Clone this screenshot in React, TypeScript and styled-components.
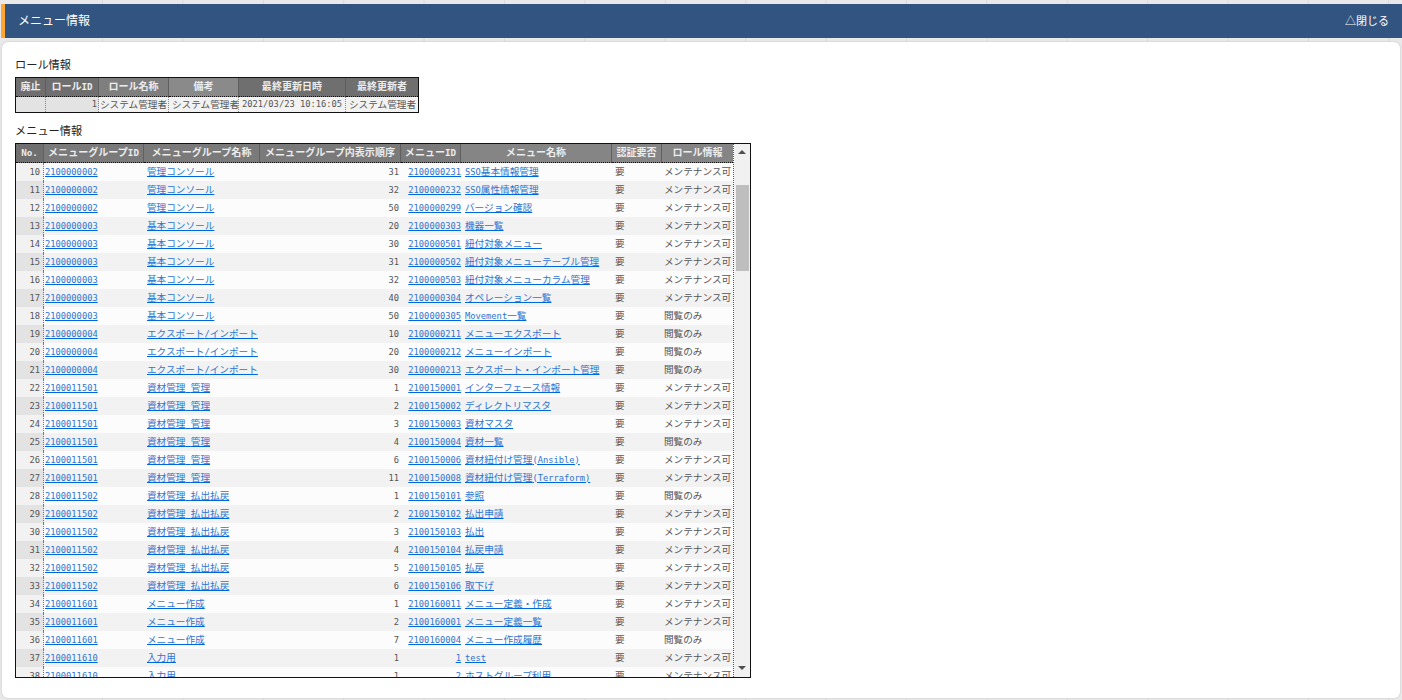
import React from 'react';
import styled, { createGlobalStyle } from 'styled-components';

const GlobalStyle = createGlobalStyle`
  html, body {
    margin: 0;
    padding: 0;
    height: 100%;
    background: #e9e9e9;
    overflow: hidden;
  }
  * { box-sizing: border-box; }
`;

const cjk = `'Noto Sans CJK JP', 'Noto Sans', sans-serif`;
const mono = `'DejaVu Sans Mono', 'Noto Sans CJK JP', monospace`;

const Page = styled.div`
  width: 1402px;
  height: 700px;
  padding: 4px 0 2px 1px;
  display: flex;
  flex-direction: column;
  font-family: ${cjk};
  color: #333;
  background:
    linear-gradient(#e9e9e9, #e9e9e9) 0 0 / 100px 100% no-repeat,
    linear-gradient(to right, #dbdbdb 1px, transparent 1px) 102px 0 / 80.4px 100% repeat-x,
    #e9e9e9;
`;

const TitleBar = styled.header`
  height: 34px;
  flex: none;
  display: flex;
  align-items: center;
  justify-content: space-between;
  background: #325480;
  border-left: 4px solid #ffa533;
  padding: 0 13px 3px 13px;
  color: #fff;
  font-size: 12px;
  line-height: 16px;
`;

const CloseToggle = styled.span`
  font-size: 11px;
`;

const Panel = styled.main`
  flex: 1;
  margin: 4px 2px 0 1px;
  background: #fff;
  border-radius: 6px;
  padding: 15px 13px 0;
  min-height: 0;
  box-shadow: 0 0 2px #bbb;
`;

const SectionLabel = styled.div`
  font-size: 11.2px;
  line-height: 14px;
  height: 14px;
  color: #222;
`;

const RoleTable = styled.table`
  margin: 6px 0 10px;
  border: 1px solid #111;
  border-collapse: separate;
  border-spacing: 0;
  table-layout: fixed;
  width: 404px;
  font-size: 9.65px;
`;

const HeadCell = styled.th<{ $tone?: string }>`
  background: ${({ $tone }) => $tone || '#7f7f7f'};
  color: #ececec;
  font-weight: 700;
  height: 19px;
  line-height: 14px;
  padding: 0 0 2px;
  text-align: center;
  white-space: nowrap;
  overflow: hidden;
  border-right: 1px solid #5f5f5f;
  border-bottom: 1px dotted #111;
  font-size: 10.05px;
  &:last-child { border-right: none; }
`;

const RoleCell = styled.td<{ $right?: boolean; $fill?: string; $pad?: number }>`
  background: ${({ $fill }) => $fill || '#f2f2f2'};
  height: 15px;
  line-height: 12px;
  padding: 0 1px 2px ${({ $pad }) => $pad ?? 1}px;
  white-space: nowrap;
  overflow: hidden;
  text-align: ${({ $right }) => ($right ? 'right' : 'left')};
  color: #555;
  border-right: 1px dotted #888;
  &:last-child { border-right: none; }
`;

const Latin = styled.span<{ $bold?: boolean }>`
  font-family: ${mono};
  font-size: ${({ $bold }) => ($bold ? 9.2 : 8.75)}px;
  font-weight: ${({ $bold }) => ($bold ? 700 : 400)};
  white-space: pre;
`;

const MenuFrame = styled.div`
  display: flex;
  width: 736px;
  height: 535px;
  margin-top: 6px;
  border: 1px solid #111;
  overflow: hidden;
`;

const TableClip = styled.div`
  width: 718px;
  flex: none;
  overflow: hidden;
  border-right: 1px dotted #555;
`;

const MenuTable = styled.table`
  border-collapse: separate;
  border-spacing: 0;
  table-layout: fixed;
  width: 717px;
  font-size: 9.65px;
`;

const Row = styled.tr<{ $even: boolean }>`
  td { background: ${({ $even }) => ($even ? '#f2f2f2' : '#fcfcfc')}; }
  td:first-child { background: ${({ $even }) => ($even ? '#e3e3e3' : '#f2f2f2')}; }
`;

const Cell = styled.td<{ $right?: boolean; $pad?: number }>`
  height: 18px;
  line-height: 14px;
  padding: 0 2px 2px ${({ $pad }) => $pad ?? 2}px;
  white-space: nowrap;
  overflow: hidden;
  color: #555;
  text-align: ${({ $right }) => ($right ? 'right' : 'left')};
`;

const NoCell = styled(Cell)`
  text-align: right;
  padding-right: 3px;
  border-right: 1px dotted #777;
`;

const LinkCell = styled(Cell)`
  a {
    color: #2f74d0;
    text-decoration: underline;
    text-decoration-color: #0066dd;
  }
`;

const MenuIdCell = styled(LinkCell)`
  text-align: right;
  padding-right: 0;
`;

const ScrollTrack = styled.div`
  flex: 1;
  display: flex;
  flex-direction: column;
  align-items: center;
  justify-content: space-between;
  background: #f1f1f1;
  position: relative;
`;

const ScrollThumb = styled.div`
  position: absolute;
  top: 41px;
  left: 2px;
  right: 1px;
  height: 86px;
  background: #bebebe;
`;

const ArrowUp = styled.div`
  margin-top: 6px;
  width: 0;
  height: 0;
  border-left: 4px solid transparent;
  border-right: 4px solid transparent;
  border-bottom: 4px solid #505050;
`;

const ArrowDown = styled.div`
  margin-bottom: 7px;
  width: 0;
  height: 0;
  border-left: 4px solid transparent;
  border-right: 4px solid transparent;
  border-top: 4px solid #505050;
`;

// ascii runs (spaces too) get the narrow mono face, the rest stays in the CJK font
const mixed = (text: string, bold = false) =>
  text.split(/([\x20-\x7e]+)/).map((part, i) =>
    /[\x20-\x7e]/.test(part) ? (
      <Latin key={i} $bold={bold}>{part}</Latin>
    ) : (
      part
    ),
  );

const MAINT = 'メンテナンス可';
const VIEW = '閲覧のみ';

type MenuRow = [number, string, string, number, string, string, string];

const rows: MenuRow[] = [
  [10, '2100000002', '管理コンソール', 31, '2100000231', 'SSO基本情報管理', MAINT],
  [11, '2100000002', '管理コンソール', 32, '2100000232', 'SSO属性情報管理', MAINT],
  [12, '2100000002', '管理コンソール', 50, '2100000299', 'バージョン確認', MAINT],
  [13, '2100000003', '基本コンソール', 20, '2100000303', '機器一覧', MAINT],
  [14, '2100000003', '基本コンソール', 30, '2100000501', '紐付対象メニュー', MAINT],
  [15, '2100000003', '基本コンソール', 31, '2100000502', '紐付対象メニューテーブル管理', MAINT],
  [16, '2100000003', '基本コンソール', 32, '2100000503', '紐付対象メニューカラム管理', MAINT],
  [17, '2100000003', '基本コンソール', 40, '2100000304', 'オペレーション一覧', MAINT],
  [18, '2100000003', '基本コンソール', 50, '2100000305', 'Movement一覧', VIEW],
  [19, '2100000004', 'エクスポート/インポート', 10, '2100000211', 'メニューエクスポート', VIEW],
  [20, '2100000004', 'エクスポート/インポート', 20, '2100000212', 'メニューインポート', VIEW],
  [21, '2100000004', 'エクスポート/インポート', 30, '2100000213', 'エクスポート・インポート管理', VIEW],
  [22, '2100011501', '資材管理 管理', 1, '2100150001', 'インターフェース情報', MAINT],
  [23, '2100011501', '資材管理 管理', 2, '2100150002', 'ディレクトリマスタ', MAINT],
  [24, '2100011501', '資材管理 管理', 3, '2100150003', '資材マスタ', MAINT],
  [25, '2100011501', '資材管理 管理', 4, '2100150004', '資材一覧', VIEW],
  [26, '2100011501', '資材管理 管理', 6, '2100150006', '資材紐付け管理(Ansible)', MAINT],
  [27, '2100011501', '資材管理 管理', 11, '2100150008', '資材紐付け管理(Terraform)', MAINT],
  [28, '2100011502', '資材管理 払出払戻', 1, '2100150101', '参照', VIEW],
  [29, '2100011502', '資材管理 払出払戻', 2, '2100150102', '払出申請', MAINT],
  [30, '2100011502', '資材管理 払出払戻', 3, '2100150103', '払出', MAINT],
  [31, '2100011502', '資材管理 払出払戻', 4, '2100150104', '払戻申請', MAINT],
  [32, '2100011502', '資材管理 払出払戻', 5, '2100150105', '払戻', MAINT],
  [33, '2100011502', '資材管理 払出払戻', 6, '2100150106', '取下げ', MAINT],
  [34, '2100011601', 'メニュー作成', 1, '2100160011', 'メニュー定義・作成', MAINT],
  [35, '2100011601', 'メニュー作成', 2, '2100160001', 'メニュー定義一覧', MAINT],
  [36, '2100011601', 'メニュー作成', 7, '2100160004', 'メニュー作成履歴', VIEW],
  [37, '2100011610', '入力用', 1, '1', 'test', MAINT],
  [38, '2100011610', '入力用', 1, '2', 'ホストグループ利用', MAINT],
];

const roleHeads: [string, number, string][] = [
  ['廃止', 30, '#6f6f6f'],
  ['ロールID', 53, '#6f6f6f'],
  ['ロール名称', 70, '#7f7f7f'],
  ['備考', 70, '#8a8a8a'],
  ['最終更新日時', 107, '#6f6f6f'],
  ['最終更新者', 72, '#6f6f6f'],
];

const menuHeads: [string, number, string][] = [
  ['No.', 28, '#6f6f6f'],
  ['メニューグループID', 100, '#7a7a7a'],
  ['メニューグループ名称', 116, '#7a7a7a'],
  ['メニューグループ内表示順序', 141, '#7a7a7a'],
  ['メニューID', 60, '#7a7a7a'],
  ['メニュー名称', 151, '#858585'],
  ['認証要否', 50, '#858585'],
  ['ロール情報', 71, '#858585'],
];

export default function App() {
  return (
    <>
      <GlobalStyle />
      <Page>
        <TitleBar>
          <span>メニュー情報</span>
          <CloseToggle>△閉じる</CloseToggle>
        </TitleBar>
        <Panel>
          <SectionLabel>ロール情報</SectionLabel>
          <RoleTable>
            <colgroup>
              {roleHeads.map(([label, w]) => (
                <col key={label} width={w} />
              ))}
            </colgroup>
            <thead>
              <tr>
                {roleHeads.map(([label, , tone]) => (
                  <HeadCell key={label} $tone={tone}>{mixed(label, true)}</HeadCell>
                ))}
              </tr>
            </thead>
            <tbody>
              <tr>
                <RoleCell $fill="#e3e3e3" />
                <RoleCell $fill="#e3e3e3" $right>{mixed('1')}</RoleCell>
                <RoleCell>システム管理者</RoleCell>
                <RoleCell $pad={3}>システム管理者</RoleCell>
                <RoleCell $pad={3}>{mixed('2021/03/23 10:16:05')}</RoleCell>
                <RoleCell $pad={3}>システム管理者</RoleCell>
              </tr>
            </tbody>
          </RoleTable>
          <SectionLabel>メニュー情報</SectionLabel>
          <MenuFrame>
            <TableClip>
              <MenuTable>
                <colgroup>
                  {menuHeads.map(([label, w]) => (
                    <col key={label} width={w} />
                  ))}
                </colgroup>
                <thead>
                  <tr>
                    {menuHeads.map(([label, , tone]) => (
                      <HeadCell key={label} $tone={tone}>{mixed(label, true)}</HeadCell>
                    ))}
                  </tr>
                </thead>
                <tbody>
                  {rows.map(([no, groupId, group, order, menuId, name, role]) => (
                    <Row key={no} $even={no % 2 === 1}>
                      <NoCell>{mixed(String(no))}</NoCell>
                      <LinkCell $pad={1}><a href="#">{mixed(groupId)}</a></LinkCell>
                      <LinkCell $pad={3}><a href="#">{mixed(group)}</a></LinkCell>
                      <Cell $right>{mixed(String(order))}</Cell>
                      <MenuIdCell><a href="#">{mixed(menuId)}</a></MenuIdCell>
                      <LinkCell $pad={4}><a href="#">{mixed(name)}</a></LinkCell>
                      <Cell $pad={3}>要</Cell>
                      <Cell>{role}</Cell>
                    </Row>
                  ))}
                </tbody>
              </MenuTable>
            </TableClip>
            <ScrollTrack>
              <ArrowUp />
              <ScrollThumb />
              <ArrowDown />
            </ScrollTrack>
          </MenuFrame>
        </Panel>
      </Page>
    </>
  );
}
